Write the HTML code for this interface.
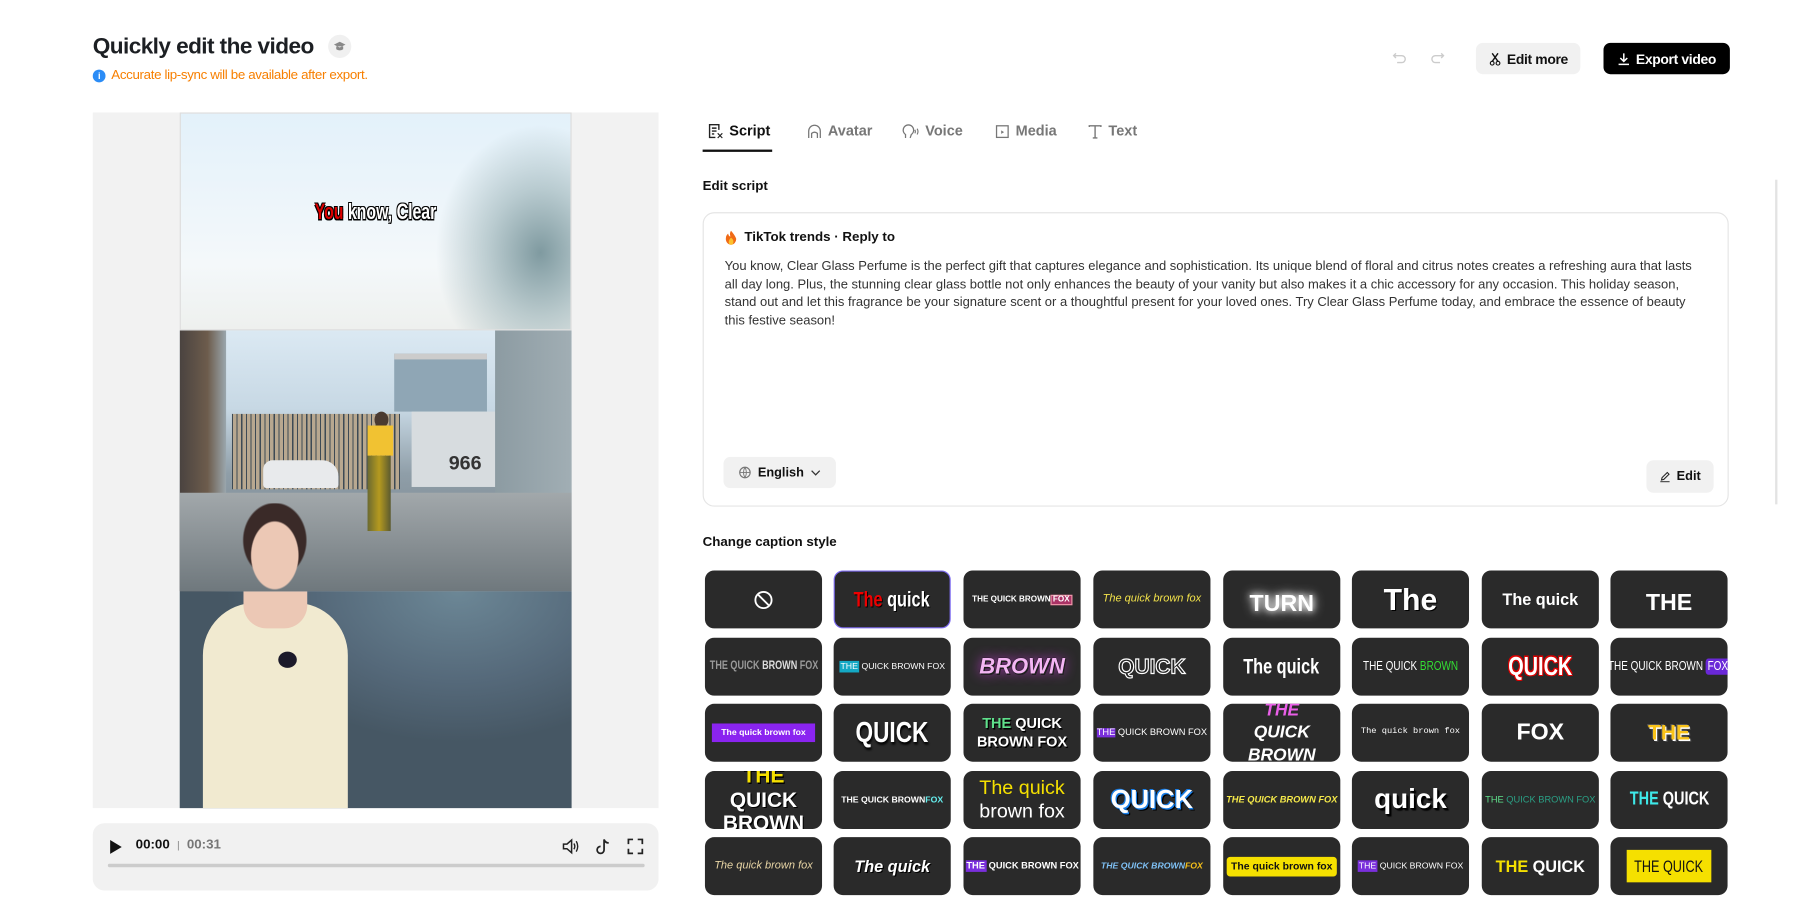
<!DOCTYPE html>
<html><head><meta charset="utf-8">
<style>
*{margin:0;padding:0;box-sizing:border-box}
html,body{width:1818px;height:909px;overflow:hidden;background:#fff;font-family:"Liberation Sans",sans-serif;color:#111}
#w{position:absolute;left:0;top:0;width:1568px;height:784px;transform:scale(1.15944);transform-origin:0 0}
.a{position:absolute}
.btn{position:absolute;border-radius:6px;font-size:12px;font-weight:bold;display:flex;align-items:center;justify-content:center;gap:5px}
.tab{position:absolute;top:106px;font-size:12.5px;font-weight:bold;color:#777;display:flex;align-items:center;gap:5px}
.c{position:absolute;width:101px;height:50px;background:#2a2a2a;border-radius:8px;display:flex;align-items:center;justify-content:center;text-align:center;overflow:hidden;color:#fff;font-weight:bold;white-space:nowrap;line-height:1}
.n{display:inline-block;transform:scaleX(.78)}
.line{white-space:nowrap}
</style></head><body><div id="w">

<div class="a" style="left:80px;top:29px;font-size:19.5px;font-weight:bold;color:#1c1f23;letter-spacing:-0.5px">Quickly edit the video</div>
<div class="a" style="left:283px;top:30px;width:20px;height:20px;border-radius:50%;background:#f0f0f0;display:flex;align-items:center;justify-content:center"><svg width="12" height="12" viewBox="0 0 12 12"><path d="M6 2 L11 4.5 L6 7 L1 4.5Z M3 6 V8.5 Q6 10.5 9 8.5 V6" fill="#888"/></svg></div>
<div class="a" style="left:80px;top:59px;display:flex;align-items:center;gap:5px;font-size:11.5px;color:#f77f00;letter-spacing:-0.3px"><span style="width:11px;height:11px;border-radius:50%;background:#2b8cf6;color:#fff;font-size:8px;font-weight:bold;display:inline-flex;align-items:center;justify-content:center">i</span>Accurate lip-sync will be available after export.</div>

<svg class="a" style="left:1200px;top:43px" width="14" height="14" viewBox="0 0 14 14"><path d="M4 3 L2 5 L4 7 M2 5 H9 A3 3 0 0 1 9 11 H5" fill="none" stroke="#ccc" stroke-width="1.2"/></svg>
<svg class="a" style="left:1233px;top:43px" width="14" height="14" viewBox="0 0 14 14"><path d="M10 3 L12 5 L10 7 M12 5 H5 A3 3 0 0 0 5 11 H9" fill="none" stroke="#ccc" stroke-width="1.2"/></svg>
<div class="btn" style="left:1273px;top:37px;width:90px;height:27px;background:#f1f1f1;color:#111;letter-spacing:-0.3px"><svg width="11" height="12" viewBox="0 0 11 12"><path d="M3 1 L8 8 M8 1 L3 8" stroke="#111" stroke-width="1.2"/><circle cx="3" cy="9.5" r="1.6" fill="none" stroke="#111"/><circle cx="8" cy="9.5" r="1.6" fill="none" stroke="#111"/></svg>Edit more</div>
<div class="btn" style="left:1383px;top:37px;width:109px;height:27px;background:#000;color:#fff;letter-spacing:-0.3px"><svg width="11" height="12" viewBox="0 0 11 12"><path d="M5.5 1 V8 M2.5 5 L5.5 8 L8.5 5 M1 10.5 H10" stroke="#fff" stroke-width="1.3" fill="none"/></svg>Export video</div>

<!-- video panel -->
<div class="a" style="left:80px;top:97px;width:488px;height:600px;background:#f2f2f2"></div>
<div class="a" style="left:155px;top:97px;width:338px;height:188px;background:radial-gradient(ellipse 90px 110px at 310px 120px,#7f9aa0,rgba(150,175,180,.6) 50%,rgba(230,240,245,0) 100%),linear-gradient(180deg,#e3f1fa,#f4f8fa 70%,#eef0ee);border:1px solid #ddd"></div>
<div class="a" style="left:155px;top:173px;width:338px;text-align:center;font-weight:bold;font-size:19px;color:#fff;text-shadow:1px 1px 0 #000,-1px -1px 0 #000,1px -1px 0 #000,-1px 1px 0 #000"><span class="n" style="transform:scaleX(.72)"><span style="color:#d00">You</span> know, Clear</span></div>
<!-- street -->
<div class="a" style="left:155px;top:285px;width:338px;height:225px;overflow:hidden;background:linear-gradient(180deg,#dbe9f3 0,#c7d8e4 30%,#8f9ea8 55%,#6e7880 100%)">
 <div class="a" style="left:0;top:0;width:40px;height:225px;background:linear-gradient(90deg,#4a4340,#6d5c4c 60%,#9aa6ad)"></div>
 <div class="a" style="left:45px;top:72px;width:145px;height:65px;background:repeating-linear-gradient(90deg,#3d4a55 0 1px,transparent 1px 4px),#b8a890"></div>
 <div class="a" style="left:185px;top:20px;width:80px;height:50px;background:#8fa6b5;border-top:5px solid #ccc"></div>
 <div class="a" style="left:200px;top:70px;width:75px;height:65px;background:#d7dcdf"></div>
 <div class="a" style="left:232px;top:105px;font-size:17px;font-weight:bold;color:#333">966</div>
 <div class="a" style="left:272px;top:0;width:66px;height:200px;background:linear-gradient(90deg,#8c9ba2,#a1aeb4)"></div>
 <div class="a" style="left:72px;top:112px;width:65px;height:24px;background:#e8eaec;border-radius:8px 14px 3px 3px"></div>
 <div class="a" style="left:0;top:140px;width:338px;height:85px;background:linear-gradient(180deg,#a2a8ab,#6f787d)"></div>
 <div class="a" style="left:168px;top:70px;width:12px;height:14px;border-radius:50%;background:#4a3a30"></div>
 <div class="a" style="left:162px;top:82px;width:22px;height:26px;background:#f1c232"></div>
 <div class="a" style="left:162px;top:108px;width:20px;height:65px;background:linear-gradient(90deg,#6b6a30,#b59a1f,#5b5a30)"></div>
</div>
<!-- avatar segment -->
<div class="a" style="left:155px;top:510px;width:338px;height:187px;overflow:hidden;background:radial-gradient(ellipse 200px 130px at 240px 0,#6c8796,#55697a 60%,#465764)">
 <div class="a" style="left:20px;top:10px;width:125px;height:190px;background:#f1ead0;border-radius:45px 45px 0 0"></div>
 <div class="a" style="left:55px;top:0;width:55px;height:32px;background:#ecc8b5;border-radius:0 0 20px 20px"></div>
</div>
<div class="a" style="left:207px;top:434px;width:58px;height:80px;background:radial-gradient(ellipse 21px 30px at 30px 45px,#ecc8b5 95%,transparent 100%),radial-gradient(ellipse 28px 33px at 30px 32px,#3a2a28 95%,transparent 100%)"></div>
<div class="a" style="left:240px;top:562px;width:16px;height:14px;border-radius:50%;background:#1c1a2a"></div>

<!-- player -->
<div class="a" style="left:80px;top:710px;width:488px;height:58px;background:#f1f1f1;border-radius:10px"></div>
<svg class="a" style="left:94px;top:724px" width="12" height="13" viewBox="0 0 12 13"><path d="M1 0.5 L11 6.5 L1 12.5Z" fill="#111"/></svg>
<div class="a" style="left:117px;top:723px;font-size:11.5px;font-weight:bold;color:#111">00:00 <span style="color:#888;font-weight:normal;font-size:9px;margin:0 3px">|</span> <span style="color:#777">00:31</span></div>
<svg class="a" style="left:484px;top:722px" width="16" height="16" viewBox="0 0 16 16"><path d="M2 6 H5 L9 2.5 V13.5 L5 10 H2Z" fill="none" stroke="#222" stroke-width="1.3"/><path d="M11 5.5 Q12.5 8 11 10.5 M13 3.5 Q15.5 8 13 12.5" fill="none" stroke="#222" stroke-width="1.2"/></svg>
<svg class="a" style="left:512px;top:722px" width="16" height="16" viewBox="0 0 16 16"><path d="M9 2 V11 A3 3 0 1 1 6 8 M9 2 Q10 5 13 5" fill="none" stroke="#222" stroke-width="1.5"/></svg>
<svg class="a" style="left:540px;top:722px" width="16" height="16" viewBox="0 0 16 16"><path d="M2 6 V2 H6 M10 2 H14 V6 M14 10 V14 H10 M6 14 H2 V10" fill="none" stroke="#222" stroke-width="1.5"/></svg>
<div class="a" style="left:93px;top:745px;width:463px;height:3px;background:#ccc;border-radius:2px"></div>

<!-- tabs -->
<div class="tab" style="left:610px;color:#111"><svg width="14" height="14" viewBox="0 0 14 14"><path d="M10 6 V1.5 H2 V12.5 H7 M4 4.5 H8 M4 7 H8 M4 9.5 H6" fill="none" stroke="#222" stroke-width="1.2"/><path d="M9 9 L13 13 M13 9 L9 13" stroke="#222" stroke-width="1"/></svg>Script</div>
<div class="a" style="left:606px;top:129px;width:60px;height:2px;background:#111"></div>
<div class="tab" style="left:696px"><svg width="13" height="13" viewBox="0 0 13 13"><path d="M1.5 12 V6 A5 5 0 0 1 11.5 6 V12 M4 12 V8 Q6.5 6 9 8 V12" fill="none" stroke="#777" stroke-width="1.1"/></svg>Avatar</div>
<div class="tab" style="left:778px"><svg width="15" height="13" viewBox="0 0 15 13"><path d="M3 12 V9 A4.5 4.5 0 1 1 8 9 L7 12" fill="none" stroke="#777" stroke-width="1.1"/><path d="M11 5 Q12 6.5 11 8 M13 4 Q14.5 6.5 13 9" fill="none" stroke="#777" stroke-width="1"/></svg>Voice</div>
<div class="tab" style="left:858px"><svg width="13" height="13" viewBox="0 0 13 13"><rect x="1.5" y="1.5" width="10" height="10" fill="none" stroke="#777" stroke-width="1.1"/><path d="M5.5 5.5 L8 7 L5.5 8.5Z" fill="#777"/></svg>Media</div>
<div class="tab" style="left:938px"><svg width="13" height="13" viewBox="0 0 13 13"><path d="M1.5 2.5 V1.5 H11.5 V2.5 M6.5 1.5 V12 M4.5 12 H8.5" fill="none" stroke="#777" stroke-width="1.2"/></svg>Text</div>

<div class="a" style="left:606px;top:155px;font-size:11.5px;font-weight:bold">Edit script</div>
<div class="a" style="left:606px;top:183px;width:885px;height:254px;border:1px solid #e5e5e5;border-radius:10px"></div>
<div class="a" style="left:625px;top:198px;font-size:11.5px;font-weight:bold;display:flex;align-items:center;gap:6px"><svg width="11" height="14" viewBox="0 0 11 14"><path d="M5.5 1 Q9 5 10 8 A4.5 5 0 0 1 1 8 Q1 5 3 3.5 Q3.5 6 5 6 Q4 3 5.5 1Z" fill="#f06a16"/><path d="M5.5 7 Q8 9 7.5 11 A2 2.2 0 0 1 3.5 11 Q3.5 9 5.5 7Z" fill="#fcc12d"/></svg>TikTok trends · Reply to</div>
<div class="a" style="left:625px;top:223px;font-size:11.2px;line-height:15.6px;color:#333">
<div class="line">You know, Clear Glass Perfume is the perfect gift that captures elegance and sophistication. Its unique blend of floral and citrus notes creates a refreshing aura that lasts</div>
<div class="line">all day long. Plus, the stunning clear glass bottle not only enhances the beauty of your vanity but also makes it a chic accessory for any occasion. This holiday season,</div>
<div class="line">stand out and let this fragrance be your signature scent or a thoughtful present for your loved ones. Try Clear Glass Perfume today, and embrace the essence of beauty</div>
<div class="line">this festive season!</div>
</div>
<div class="btn" style="left:624px;top:394px;width:97px;height:27px;background:#f1f1f1;font-size:11px;gap:6px"><svg width="11" height="11" viewBox="0 0 11 11"><circle cx="5.5" cy="5.5" r="4.5" fill="none" stroke="#777"/><path d="M1 5.5 H10 M5.5 1 Q3 5.5 5.5 10 Q8 5.5 5.5 1" fill="none" stroke="#777" stroke-width=".8"/></svg>English <svg width="9" height="6" viewBox="0 0 9 6"><path d="M1 1 L4.5 4.5 L8 1" fill="none" stroke="#333" stroke-width="1.1"/></svg></div>
<div class="btn" style="left:1420px;top:397px;width:58px;height:28px;background:#f1f1f1;font-size:11px"><svg width="10" height="10" viewBox="0 0 10 10"><path d="M2 8 L2.5 6 L7 1.5 L8.5 3 L4 7.5Z M1 9.5 H9" fill="none" stroke="#222" stroke-width=".9"/></svg>Edit</div>
<div class="a" style="left:1531px;top:155px;width:2px;height:280px;background:#e3e3e3"></div>

<div class="a" style="left:606px;top:462px;font-size:11.5px;font-weight:bold">Change caption style</div>

<!-- row 1 y492 -->
<div class="c" style="left:608px;top:492px"><svg width="17" height="17" viewBox="0 0 17 17"><circle cx="8.5" cy="8.5" r="7" fill="none" stroke="#fff" stroke-width="1.6"/><path d="M4 4 L13 13" stroke="#fff" stroke-width="1.6"/></svg></div>
<div class="c" style="left:719px;top:492px;border:1.5px solid #7d6bf0;font-size:18px;text-shadow:1px 1px 0 #000"><span class="n"><span style="color:#e00">The</span> quick</span></div>
<div class="c" style="left:831px;top:492px;font-size:7px">THE QUICK BROWN <span style="border:1px solid #e9a;background:#a36;padding:0 1px">FOX</span></div>
<div class="c" style="left:943px;top:492px;font-size:9.5px;font-weight:normal;font-style:italic;color:#f2e24a">The quick brown fox</div>
<div class="c" style="left:1055px;top:492px;font-size:20px;text-shadow:0 0 6px #fff,0 0 10px #fff;padding-top:8px">TURN</div>
<div class="c" style="left:1166px;top:492px;font-size:26px;text-shadow:1px 1px 0 #000">The</div>
<div class="c" style="left:1278px;top:492px;font-size:14px">The quick</div>
<div class="c" style="left:1389px;top:492px;font-size:20px;padding-top:5px">THE</div>
<!-- row 2 y550 -->
<div class="c" style="left:608px;top:550px;font-size:10px;color:#999"><span class="n">THE QUICK <span style="color:#ddd">BROWN</span> FOX</span></div>
<div class="c" style="left:719px;top:550px;font-size:7.5px;font-weight:normal"><span style="background:#14a8c4;padding:1px">THE</span>&nbsp;QUICK BROWN FOX</div>
<div class="c" style="left:831px;top:550px;font-size:19px;font-style:italic;color:#f3b6f3;text-shadow:0 0 1px #000,1px 1px 0 #222,0 0 10px #c33cd0">BROWN</div>
<div class="c" style="left:943px;top:550px;font-size:18px;color:#222;-webkit-text-stroke:1px #fff">QUICK</div>
<div class="c" style="left:1055px;top:550px;font-size:18px"><span class="n">The quick</span></div>
<div class="c" style="left:1166px;top:550px;font-size:11px;font-weight:normal"><span class="n">THE QUICK <span style="color:#3d3">BROWN</span></span></div>
<div class="c" style="left:1278px;top:550px;font-size:22px;text-shadow:1px 1px 0 #d00,-1px -1px 0 #d00,1px -1px 0 #d00,-1px 1px 0 #d00"><span class="n">QUICK</span></div>
<div class="c" style="left:1389px;top:550px;font-size:11px;font-weight:normal"><span class="n">THE QUICK BROWN <span style="background:#6a28d8;padding:1px 2px;border-radius:3px">FOX</span></span></div>
<!-- row 3 y607 -->
<div class="c" style="left:608px;top:607px;font-size:7.5px"><span style="background:#8a24f0;padding:4px 8px">The quick brown fox</span></div>
<div class="c" style="left:719px;top:607px;font-size:25px;text-shadow:1px 2px 2px #000"><span class="n">QUICK</span></div>
<div class="c" style="left:831px;top:607px;font-size:12.5px;line-height:1.3;text-shadow:1px 1px 0 #000"><div><span style="color:#5fe08b">THE</span> QUICK<br>BROWN FOX</div></div>
<div class="c" style="left:943px;top:607px;font-size:8px;font-weight:normal"><span style="background:#7a2fdc">THE</span>&nbsp;QUICK BROWN FOX</div>
<div class="c" style="left:1055px;top:607px;font-size:15px;font-style:italic;line-height:1.3;align-items:center"><div><span style="color:#ea5fe8">THE</span><br>QUICK<br>BROWN</div></div>
<div class="c" style="left:1166px;top:607px;font-size:7.5px;font-weight:normal;font-family:'Liberation Mono',monospace">The quick brown fox</div>
<div class="c" style="left:1278px;top:607px;font-size:20px">FOX</div>
<div class="c" style="left:1389px;top:607px;font-size:18px;color:#f9c31a;text-shadow:1px 1px 0 #fff,-1px -1px 0 #555,2px 2px 0 #444">THE</div>
<!-- row 4 y665 -->
<div class="c" style="left:608px;top:665px;font-size:18px;line-height:1.15;text-shadow:1px 1px 0 #000"><div><span style="color:#f5e000">THE</span><br>QUICK<br>BROWN</div></div>
<div class="c" style="left:719px;top:665px;font-size:7.5px">THE QUICK BROWN <span style="color:#6ee">FOX</span></div>
<div class="c" style="left:831px;top:665px;font-size:17px;font-weight:normal;line-height:1.15"><div><span style="color:#f5e000">The quick</span><br>brown fox</div></div>
<div class="c" style="left:943px;top:665px;font-size:22px;text-shadow:1px 1px 0 #1a7fe8,-1px -1px 0 #1a7fe8,2px 2px 0 #000">QUICK</div>
<div class="c" style="left:1055px;top:665px;font-size:8px;font-style:italic;color:#f5e94a">THE QUICK BROWN FOX</div>
<div class="c" style="left:1166px;top:665px;font-size:24px;text-shadow:1px 1px 0 #000,2px 2px 1px #000">quick</div>
<div class="c" style="left:1278px;top:665px;font-size:8px;font-weight:normal;color:#2aa085"><span style="color:#5fe08b">THE</span>&nbsp;QUICK BROWN FOX</div>
<div class="c" style="left:1389px;top:665px;font-size:16px"><span class="n"><span style="color:#3ee8e8">THE</span> QUICK</span></div>
<!-- row 5 y722 -->
<div class="c" style="left:608px;top:722px;font-size:9.5px;font-weight:normal;font-style:italic;color:#e8d5a5">The quick brown fox</div>
<div class="c" style="left:719px;top:722px;font-size:14px;font-style:italic;text-shadow:1px 1px 0 #000">The quick</div>
<div class="c" style="left:831px;top:722px;font-size:8px"><span style="background:#7a2fdc;padding:1px">THE</span>&nbsp;QUICK BROWN FOX</div>
<div class="c" style="left:943px;top:722px;font-size:7.5px;font-style:italic;color:#7fc1f5">THE QUICK BROWN <span style="color:#f5c01a">FOX</span></div>
<div class="c" style="left:1055px;top:722px;font-size:9px;color:#111"><span style="background:#f5e000;padding:4px 4px;border-radius:3px">The quick brown fox</span></div>
<div class="c" style="left:1166px;top:722px;font-size:7.5px;font-weight:normal"><span style="background:#7a2fdc;padding:1px">THE</span>&nbsp;QUICK BROWN FOX</div>
<div class="c" style="left:1278px;top:722px;font-size:14px"><span style="color:#f5e000">THE</span>&nbsp;QUICK</div>
<div class="c" style="left:1389px;top:722px;font-size:14px;font-weight:normal;color:#111"><span style="background:#f5e000;padding:7px 4px;display:inline-block"><span class="n" style="margin:0 -6px">THE QUICK</span></span></div>

</div></body></html>
